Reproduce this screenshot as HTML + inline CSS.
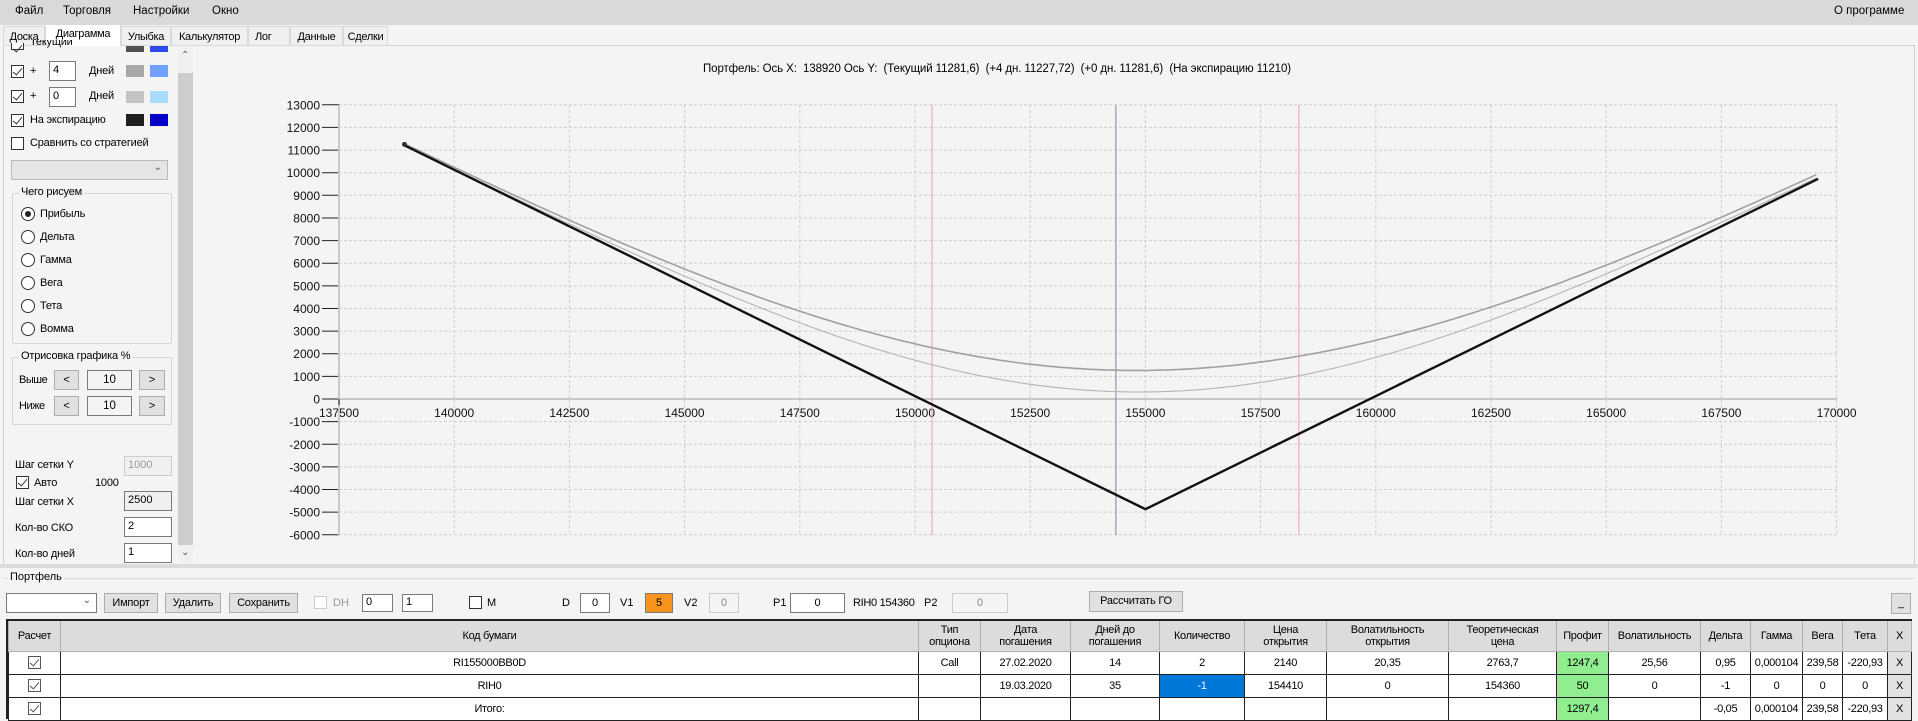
<!DOCTYPE html>
<html><head><meta charset="utf-8">
<style>
*{box-sizing:border-box;margin:0;padding:0}
body{width:1918px;height:716px;overflow:hidden;background:#f4f4f4;font-family:"Liberation Sans","DejaVu Sans",sans-serif;font-size:11.5px;color:#000;position:relative}
.a{position:absolute;white-space:nowrap}
.l{font-size:11px;letter-spacing:-0.2px}
.tab{position:absolute;top:26px;height:20px;border:1px solid #d9d9d9;background:#f0f0f0;padding-top:4px;text-align:center;font-size:11px;letter-spacing:-0.3px}
.cb{position:absolute;width:13px;height:13px;border:1px solid #333;background:#fff}
.cb.on::after{content:"";position:absolute;left:3px;top:0px;width:4px;height:8px;border:solid #333;border-width:0 1.3px 1.3px 0;transform:rotate(40deg)}
.rb{position:absolute;width:14px;height:14px;border:1px solid #333;border-radius:50%;background:#fff}
.rb.on::after{content:"";position:absolute;left:3px;top:3px;width:6px;height:6px;border-radius:50%;background:#222}
.tb{position:absolute;background:#fff;border:1px solid #7a7a7a;padding-left:3px;line-height:17px;font-size:11px}
.btn{position:absolute;background:#e1e1e1;border:1px solid #adadad;text-align:center;line-height:18px;font-size:11px;letter-spacing:-0.2px}
.sw{position:absolute;width:18px;height:12px}
.grp{position:absolute;border:1px solid #d5d5d5;border-radius:2px}
.grp span{position:absolute;top:-8px;left:6px;background:#f4f4f4;padding:0 2px;font-size:11px;letter-spacing:-0.2px}
table{border-collapse:collapse;font-size:11px;letter-spacing:-0.3px}
td{border:1px solid #222;text-align:center;height:23px;padding:0;background:#fff}
th{border:1px solid #b0b0b0;border-top:none;background:#dcdcdc;font-weight:normal;height:30px;line-height:12px;font-size:11px}
.g{background:#90ee90}
.ck{display:inline-block;width:13px;height:13px;border:1px solid #555;position:relative;vertical-align:middle}
.ck::after{content:"";position:absolute;left:3px;top:0;width:4px;height:8px;border:solid #555;border-width:0 1px 1px 0;transform:rotate(40deg)}
</style></head><body>
<!-- menu -->
<div class="a" style="left:0;top:0;width:1918px;height:25px;background:#d9d9d9"></div>
<div class="a" style="left:15px;top:5px">Файл</div>
<div class="a" style="left:63px;top:5px">Торговля</div>
<div class="a" style="left:133px;top:5px">Настройки</div>
<div class="a" style="left:212px;top:5px">Окно</div>
<div class="a" style="left:1834px;top:5px">О программе</div>
<!-- tabs -->
<div class="a" style="left:3px;top:45px;width:1912px;height:1px;background:#d0d0d0"></div>
<div class="tab" style="left:3px;width:42px">Доска</div>
<div class="tab" style="left:45px;top:24px;width:76px;height:22px;border-bottom:none;background:#fff;padding-top:3px">Диаграмма</div>
<div class="tab" style="left:121px;width:50px">Улыбка</div>
<div class="tab" style="left:171px;width:77px">Калькулятор</div>
<div class="tab" style="left:248px;width:42px;text-align:left;padding-left:6px">Лог</div>
<div class="tab" style="left:290px;width:53px">Данные</div>
<div class="tab" style="left:343px;width:45px">Сделки</div>
<div class="a" style="left:3px;top:46px;width:1px;height:518px;background:#d0d0d0"></div>
<div class="a" style="left:1914px;top:46px;width:1px;height:518px;background:#d0d0d0"></div>
<!-- left panel -->
<div class="cb on" style="left:11px;top:43px;height:7px;border-top:none"></div>
<div class="a l" style="left:30px;top:40px;height:8px;overflow:hidden;line-height:4px">Текущий</div>
<div class="sw" style="left:126px;top:46px;height:6px;background:#505050"></div><div class="sw" style="left:150px;top:46px;height:6px;background:#2b4bef"></div>
<div class="cb on" style="left:11px;top:65px"></div><div class="a l" style="left:30px;top:65px">+</div>
<div class="tb" style="left:49px;top:61px;width:27px;height:20px">4</div><div class="a l" style="left:89px;top:65px">Дней</div>
<div class="sw" style="left:126px;top:65px;background:#a8a8a8"></div><div class="sw" style="left:150px;top:65px;background:#6fa0ff"></div>
<div class="cb on" style="left:11px;top:90px"></div><div class="a l" style="left:30px;top:90px">+</div>
<div class="tb" style="left:49px;top:87px;width:27px;height:20px">0</div><div class="a l" style="left:89px;top:90px">Дней</div>
<div class="sw" style="left:126px;top:91px;background:#c4c4c4"></div><div class="sw" style="left:150px;top:91px;background:#a8dcff"></div>
<div class="cb on" style="left:11px;top:114px"></div><div class="a l" style="left:30px;top:114px">На экспирацию</div>
<div class="sw" style="left:126px;top:114px;background:#1e1e1e"></div><div class="sw" style="left:150px;top:114px;background:#0000c8"></div>
<div class="cb" style="left:11px;top:137px"></div><div class="a l" style="left:30px;top:137px">Сравнить со стратегией</div>
<div class="a" style="left:11px;top:160px;width:157px;height:20px;background:#e5e5e5;border:1px solid #bbb"><span class="a" style="right:5px;top:1px;font-size:10px;color:#555">&#8964;</span></div>
<div class="grp" style="left:12px;top:193px;width:160px;height:151px"><span>Чего рисуем</span></div>
<div class="rb on" style="left:21px;top:207px"></div><div class="a l" style="left:40px;top:208px">Прибыль</div>
<div class="rb" style="left:21px;top:230px"></div><div class="a l" style="left:40px;top:231px">Дельта</div>
<div class="rb" style="left:21px;top:253px"></div><div class="a l" style="left:40px;top:254px">Гамма</div>
<div class="rb" style="left:21px;top:276px"></div><div class="a l" style="left:40px;top:277px">Вега</div>
<div class="rb" style="left:21px;top:299px"></div><div class="a l" style="left:40px;top:300px">Тета</div>
<div class="rb" style="left:21px;top:322px"></div><div class="a l" style="left:40px;top:323px">Вомма</div>
<div class="grp" style="left:12px;top:357px;width:160px;height:68px"><span>Отрисовка графика %</span></div>
<div class="a l" style="left:19px;top:374px;letter-spacing:-0.5px">Выше</div>
<div class="btn" style="left:54px;top:370px;width:25px;height:20px">&lt;</div>
<div class="a" style="left:87px;top:370px;width:45px;height:20px;border:1px solid #7a7a7a;text-align:center;line-height:18px">10</div>
<div class="btn" style="left:139px;top:370px;width:26px;height:20px">&gt;</div>
<div class="a l" style="left:19px;top:400px;letter-spacing:-0.5px">Ниже</div>
<div class="btn" style="left:54px;top:396px;width:25px;height:20px">&lt;</div>
<div class="a" style="left:87px;top:396px;width:45px;height:20px;border:1px solid #7a7a7a;text-align:center;line-height:18px">10</div>
<div class="btn" style="left:139px;top:396px;width:26px;height:20px">&gt;</div>
<div class="a l" style="left:15px;top:459px">Шаг сетки Y</div>
<div class="tb" style="left:124px;top:456px;width:48px;height:20px;background:#f0f0f0;border-color:#ccc;color:#999">1000</div>
<div class="cb on" style="left:16px;top:476px"></div><div class="a l" style="left:34px;top:477px">Авто</div><div class="a l" style="left:95px;top:477px">1000</div>
<div class="a l" style="left:15px;top:496px">Шаг сетки X</div>
<div class="tb" style="left:124px;top:491px;width:48px;height:20px;background:#f0f0f0">2500</div>
<div class="a l" style="left:15px;top:522px">Кол-во СКО</div>
<div class="tb" style="left:124px;top:517px;width:48px;height:20px">2</div>
<div class="a l" style="left:15px;top:548px">Кол-во дней</div>
<div class="tb" style="left:124px;top:543px;width:48px;height:20px">1</div>
<div class="a" style="left:178px;top:46px;width:15px;height:517px;background:#f0f0f0"></div>
<div class="a" style="left:178px;top:73px;width:15px;height:472px;background:#cdcdcd"></div>
<div class="a" style="left:181px;top:50px;font-size:10px;color:#555">&#8963;</div>
<div class="a" style="left:181px;top:547px;font-size:10px;color:#555">&#8964;</div>
<!-- chart -->
<div class="a" style="left:703px;top:63px;font-size:11.5px;letter-spacing:-0.1px">Портфель: Ось X: &nbsp;138920 Ось Y: &nbsp;(Текущий 11281,6) &nbsp;(+4 дн. 11227,72) &nbsp;(+0 дн. 11281,6) &nbsp;(На экспирацию 11210)</div>
<svg id="ch" class="a" style="left:0;top:0" width="1918" height="716" font-family="Liberation Sans, sans-serif" font-size="12"></svg>
<!-- bottom -->
<div class="a" style="left:0;top:564px;width:1918px;height:4px;background:#dcdcdc"></div>
<div class="a" style="left:4px;top:578px;width:1910px;height:1px;background:#dcdcdc"></div>
<div class="a" style="left:8px;top:571px;background:#f4f4f4;padding:0 2px;font-size:11px">Портфель</div>
<div class="a" style="left:6px;top:593px;width:91px;height:20px;background:#fff;border:1px solid #7a7a7a"><span class="a" style="right:5px;top:1px;font-size:10px;color:#555">&#8964;</span></div>
<div class="btn" style="left:104px;top:593px;width:54px;height:20px">Импорт</div>
<div class="btn" style="left:165px;top:593px;width:56px;height:20px">Удалить</div>
<div class="btn" style="left:229px;top:593px;width:69px;height:20px">Сохранить</div>
<div class="cb" style="left:314px;top:596px;border-color:#ccc"></div><div class="a" style="left:333px;top:597px;color:#999;font-size:11px">DH</div>
<div class="tb" style="left:362px;top:594px;width:31px;height:18px;line-height:15px">0</div>
<div class="tb" style="left:402px;top:594px;width:31px;height:18px;line-height:15px">1</div>
<div class="cb" style="left:469px;top:596px"></div><div class="a" style="left:487px;top:597px;font-size:11px">M</div>
<div class="a" style="left:562px;top:597px;font-size:11px">D</div>
<div class="a" style="left:580px;top:593px;width:30px;height:20px;background:#fff;border:1px solid #7a7a7a;text-align:center;line-height:18px;font-size:11px">0</div>
<div class="a" style="left:620px;top:597px;font-size:11px">V1</div>
<div class="a" style="left:645px;top:593px;width:28px;height:20px;background:#f7941d;border:1px solid #7a7a7a;text-align:center;line-height:18px;font-size:11px">5</div>
<div class="a" style="left:684px;top:597px;font-size:11px">V2</div>
<div class="a" style="left:709px;top:593px;width:30px;height:20px;background:#f4f4f4;border:1px solid #ccc;text-align:center;line-height:18px;font-size:11px;color:#888">0</div>
<div class="a" style="left:773px;top:597px;font-size:11px">P1</div>
<div class="a" style="left:790px;top:593px;width:55px;height:20px;background:#fff;border:1px solid #7a7a7a;text-align:center;line-height:18px;font-size:11px">0</div>
<div class="a" style="left:853px;top:597px;font-size:11px;letter-spacing:-0.3px">RIH0 154360</div>
<div class="a" style="left:924px;top:597px;font-size:11px">P2</div>
<div class="a" style="left:952px;top:593px;width:56px;height:20px;background:#f4f4f4;border:1px solid #ccc;text-align:center;line-height:18px;font-size:11px;color:#888">0</div>
<div class="btn" style="left:1089px;top:591px;width:94px;height:21px">Рассчитать ГО</div>
<div class="btn" style="left:1891px;top:593px;width:20px;height:21px">_</div>
<div class="a" style="left:6px;top:619px;width:1906px;height:100px;border:2px solid #222;border-bottom:none;background:#fff">
<table style="width:1904px;table-layout:fixed">
<colgroup><col style="width:52px"><col style="width:858px"><col style="width:62px"><col style="width:90px"><col style="width:89px"><col style="width:85px"><col style="width:82px"><col style="width:122px"><col style="width:108px"><col style="width:52px"><col style="width:92px"><col style="width:50px"><col style="width:52px"><col style="width:40px"><col style="width:45px"><col></colgroup>
<tr><th>Расчет</th><th>Код бумаги</th><th>Тип<br>опциона</th><th>Дата<br>погашения</th><th>Дней до<br>погашения</th><th>Количество</th><th>Цена<br>открытия</th><th>Волатильность<br>открытия</th><th>Теоретическая<br>цена</th><th>Профит</th><th>Волатильность</th><th>Дельта</th><th>Гамма</th><th>Вега</th><th>Тета</th><th>X</th></tr>
<tr><td><span class="ck"></span></td><td>RI155000BB0D</td><td>Call</td><td>27.02.2020</td><td>14</td><td>2</td><td>2140</td><td>20,35</td><td>2763,7</td><td class="g">1247,4</td><td>25,56</td><td>0,95</td><td>0,000104</td><td>239,58</td><td>-220,93</td><td style="background:#e1e1e1">X</td></tr>
<tr><td><span class="ck"></span></td><td>RIH0</td><td></td><td>19.03.2020</td><td>35</td><td style="background:#0078d7;color:#fff">-1</td><td>154410</td><td>0</td><td>154360</td><td class="g">50</td><td>0</td><td>-1</td><td>0</td><td>0</td><td>0</td><td style="background:#e1e1e1">X</td></tr>
<tr><td><span class="ck"></span></td><td>Итого:</td><td></td><td></td><td></td><td></td><td></td><td></td><td></td><td class="g">1297,4</td><td></td><td>-0,05</td><td>0,000104</td><td>239,58</td><td>-220,93</td><td style="background:#e1e1e1">X</td></tr>
</table></div>
<script>
(function(){
var s=document.getElementById('ch'),h='';
function X(v){return 339+(v-137500)/2500*115.2}
function Y(v){return 399-v/1000*22.63}
for(var v=-6000;v<=13000;v+=1000){var y=Y(v).toFixed(1);
 if(v!==0)h+='<line x1="339" y1="'+y+'" x2="1837" y2="'+y+'" stroke="#cfcfcf" stroke-dasharray="3,2"/>';
 h+='<line x1="322" y1="'+y+'" x2="339" y2="'+y+'" stroke="#222"/>';
 h+='<text x="320" y="'+(Y(v)+4.5).toFixed(1)+'" text-anchor="end" fill="#111">'+v+'</text>';}
for(var v=140000;v<=170000;v+=2500){var x=X(v).toFixed(1);
 h+='<line x1="'+x+'" y1="105" x2="'+x+'" y2="535" stroke="#cfcfcf" stroke-dasharray="3,2"/>';}
for(var v=137500;v<=170000;v+=2500){h+='<text x="'+X(v).toFixed(1)+'" y="417" text-anchor="middle" fill="#111">'+v+'</text>';}
h+='<line x1="339" y1="399" x2="1837" y2="399" stroke="#c8c8c8" stroke-width="2"/>';
h+='<line x1="339" y1="105" x2="339" y2="535" stroke="#c8c8c8" stroke-width="2"/>';
h+='<line x1="339" y1="399" x2="339" y2="405" stroke="#222"/>';
h+='<line x1="'+X(154360)+'" y1="105" x2="'+X(154360)+'" y2="535" stroke="#7a8aa0"/>';
h+='<line x1="'+X(150370)+'" y1="105" x2="'+X(150370)+'" y2="535" stroke="#f0a0a0"/>';
h+='<line x1="'+X(158330)+'" y1="105" x2="'+X(158330)+'" y2="535" stroke="#f0a0a0"/>';
function N(x){var t=1/(1+0.2316419*Math.abs(x)),d=0.3989423*Math.exp(-x*x/2),p=d*t*(0.3193815+t*(-0.3565638+t*(1.781478+t*(-1.821256+t*1.330274))));return x>0?1-p:p}
function C(S,sg){var d1=(Math.log(S/155000)+sg*sg/2)/sg;return S*N(d1)-155000*N(d1-sg)}
function P(S,sg){return 2*(C(S,sg)-2140)-(S-154410)}
function path(sg){var d='';for(var S=138920;S<=169600;S+=80){d+=(d?'L':'M')+X(S).toFixed(1)+','+Y(P(S,sg)).toFixed(1)}return d}
h+='<path d="'+path(0.0496)+'" fill="none" stroke="#a0a0a0" stroke-width="1.6"/>';
h+='<path d="'+path(0.0419)+'" fill="none" stroke="#b4b4b4" stroke-width="1.1"/>';
h+='<path d="M'+X(138920)+','+Y(11210)+'L'+X(155000)+','+Y(-4870)+'L'+X(169600)+','+Y(9730)+'" fill="none" stroke="#111" stroke-width="2.4"/>';
h+='<circle cx="'+X(138920)+'" cy="'+Y(11250)+'" r="2.5" fill="#333"/>';
s.innerHTML=h;
})();
</script>
</body></html>
